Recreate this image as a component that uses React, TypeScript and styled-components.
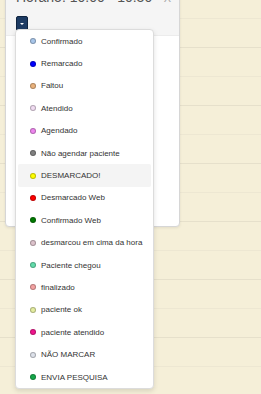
import React from 'react';
import styled, { createGlobalStyle } from 'styled-components';

const GlobalStyle = createGlobalStyle`
  html, body {
    margin: 0;
    padding: 0;
    background: #f5efd8;
    overflow: hidden;
    font-family: "Liberation Sans", Arial, sans-serif;
  }
`;

const Page = styled.div`
  position: relative;
  width: 261px;
  height: 394px;
  overflow: hidden;
  background: #f5efd8;
`;

const Slots = styled.div`
  display: flex;
  flex-direction: column;
  margin-top: -10px;
`;

const Slot = styled.div<{ $hour: boolean }>`
  height: 28px;
  border-bottom: 1px solid ${(p) => (p.$hour ? '#e6e0cb' : '#ede7d2')};
  flex-shrink: 0;
`;

const Popup = styled.div`
  position: absolute;
  left: 5px;
  top: -18px;
  width: 175px;
  height: 245px;
  background: #fff;
  border: 1px solid #d6d6d6;
  border-radius: 4px;
  box-shadow: 0 1px 3px rgba(0, 0, 0, 0.08);
  box-sizing: border-box;
`;

const Header = styled.div`
  position: relative;
  background: #f5f5f5;
  padding: 6px 10px 4px;
  border-bottom: 1px solid #ececec;
  border-radius: 4px 4px 0 0;
`;

const Title = styled.div`
  font-size: 14px;
  line-height: 16px;
  color: #555;
`;

const Close = styled.span`
  position: absolute;
  right: 8px;
  top: 9px;
  font-size: 11px;
  color: #aaa;
`;

const ToggleButton = styled.button`
  display: flex;
  align-items: center;
  justify-content: center;
  margin-top: 11px;
  width: 12px;
  height: 15px;
  padding: 0;
  background: #1d3b63;
  border: 1px solid #0f2440;
  border-radius: 2px;
`;

const Caret = styled.span`
  width: 0;
  height: 0;
  border-left: 2px solid transparent;
  border-right: 2px solid transparent;
  border-top: 2px solid #fff;
`;

const Menu = styled.ul`
  position: absolute;
  left: 9px;
  top: 46px;
  width: 139px;
  margin: 0;
  padding: 0;
  list-style: none;
  background: #fff;
  border: 1px solid #dcdcdc;
  border-radius: 4px;
  box-shadow: 0 2px 5px rgba(0, 0, 0, 0.12);
  box-sizing: border-box;
  z-index: 2;
`;

const Item = styled.li<{ $active?: boolean }>`
  display: flex;
  align-items: center;
  gap: 5px;
  height: 22.4px;
  margin: 0 2px;
  padding-left: 12px;
  font-size: 8px;
  color: #333;
  border-radius: 2px;
  background: ${(p) => (p.$active ? '#f4f4f4' : 'transparent')};
`;

const Dot = styled.span<{ $color: string }>`
  width: 6px;
  height: 6px;
  border-radius: 50%;
  background: ${(p) => p.$color};
  border: 1px solid rgba(0, 0, 0, 0.25);
  box-sizing: border-box;
  flex-shrink: 0;
`;

const statuses = [
  { label: 'Confirmado', color: '#a8c6ea' },
  { label: 'Remarcado', color: '#0000ff' },
  { label: 'Faltou', color: '#eab27c' },
  { label: 'Atendido', color: '#f1dcf2' },
  { label: 'Agendado', color: '#ee86ee' },
  { label: 'Não agendar paciente', color: '#808080' },
  { label: 'DESMARCADO!', color: '#ffff00', active: true },
  { label: 'Desmarcado Web', color: '#ff0000' },
  { label: 'Confirmado Web', color: '#007a00' },
  { label: 'desmarcou em cima da hora', color: '#dcc2cb' },
  { label: 'Paciente chegou', color: '#62dcab' },
  { label: 'finalizado', color: '#f4a2a2' },
  { label: 'paciente ok', color: '#e4eda0' },
  { label: 'paciente atendido', color: '#f0148c' },
  { label: 'NÃO MARCAR', color: '#dde1ea' },
  { label: 'ENVIA PESQUISA', color: '#14a84a' },
];

const App: React.FC = () => {
  return (
    <Page>
      <GlobalStyle />
      <Slots>
        {Array.from({ length: 15 }).map((_, i) => (
          <Slot key={i} $hour={i % 2 === 1} />
        ))}
      </Slots>
      <Popup>
        <Header>
          <Title>Horário: 10:00 - 10:30</Title>
          <Close>X</Close>
          <ToggleButton>
            <Caret />
          </ToggleButton>
        </Header>
        <Menu>
          {statuses.map((s) => (
            <Item key={s.label} $active={s.active}>
              <Dot $color={s.color} />
              {s.label}
            </Item>
          ))}
        </Menu>
      </Popup>
    </Page>
  );
};

export default App;
